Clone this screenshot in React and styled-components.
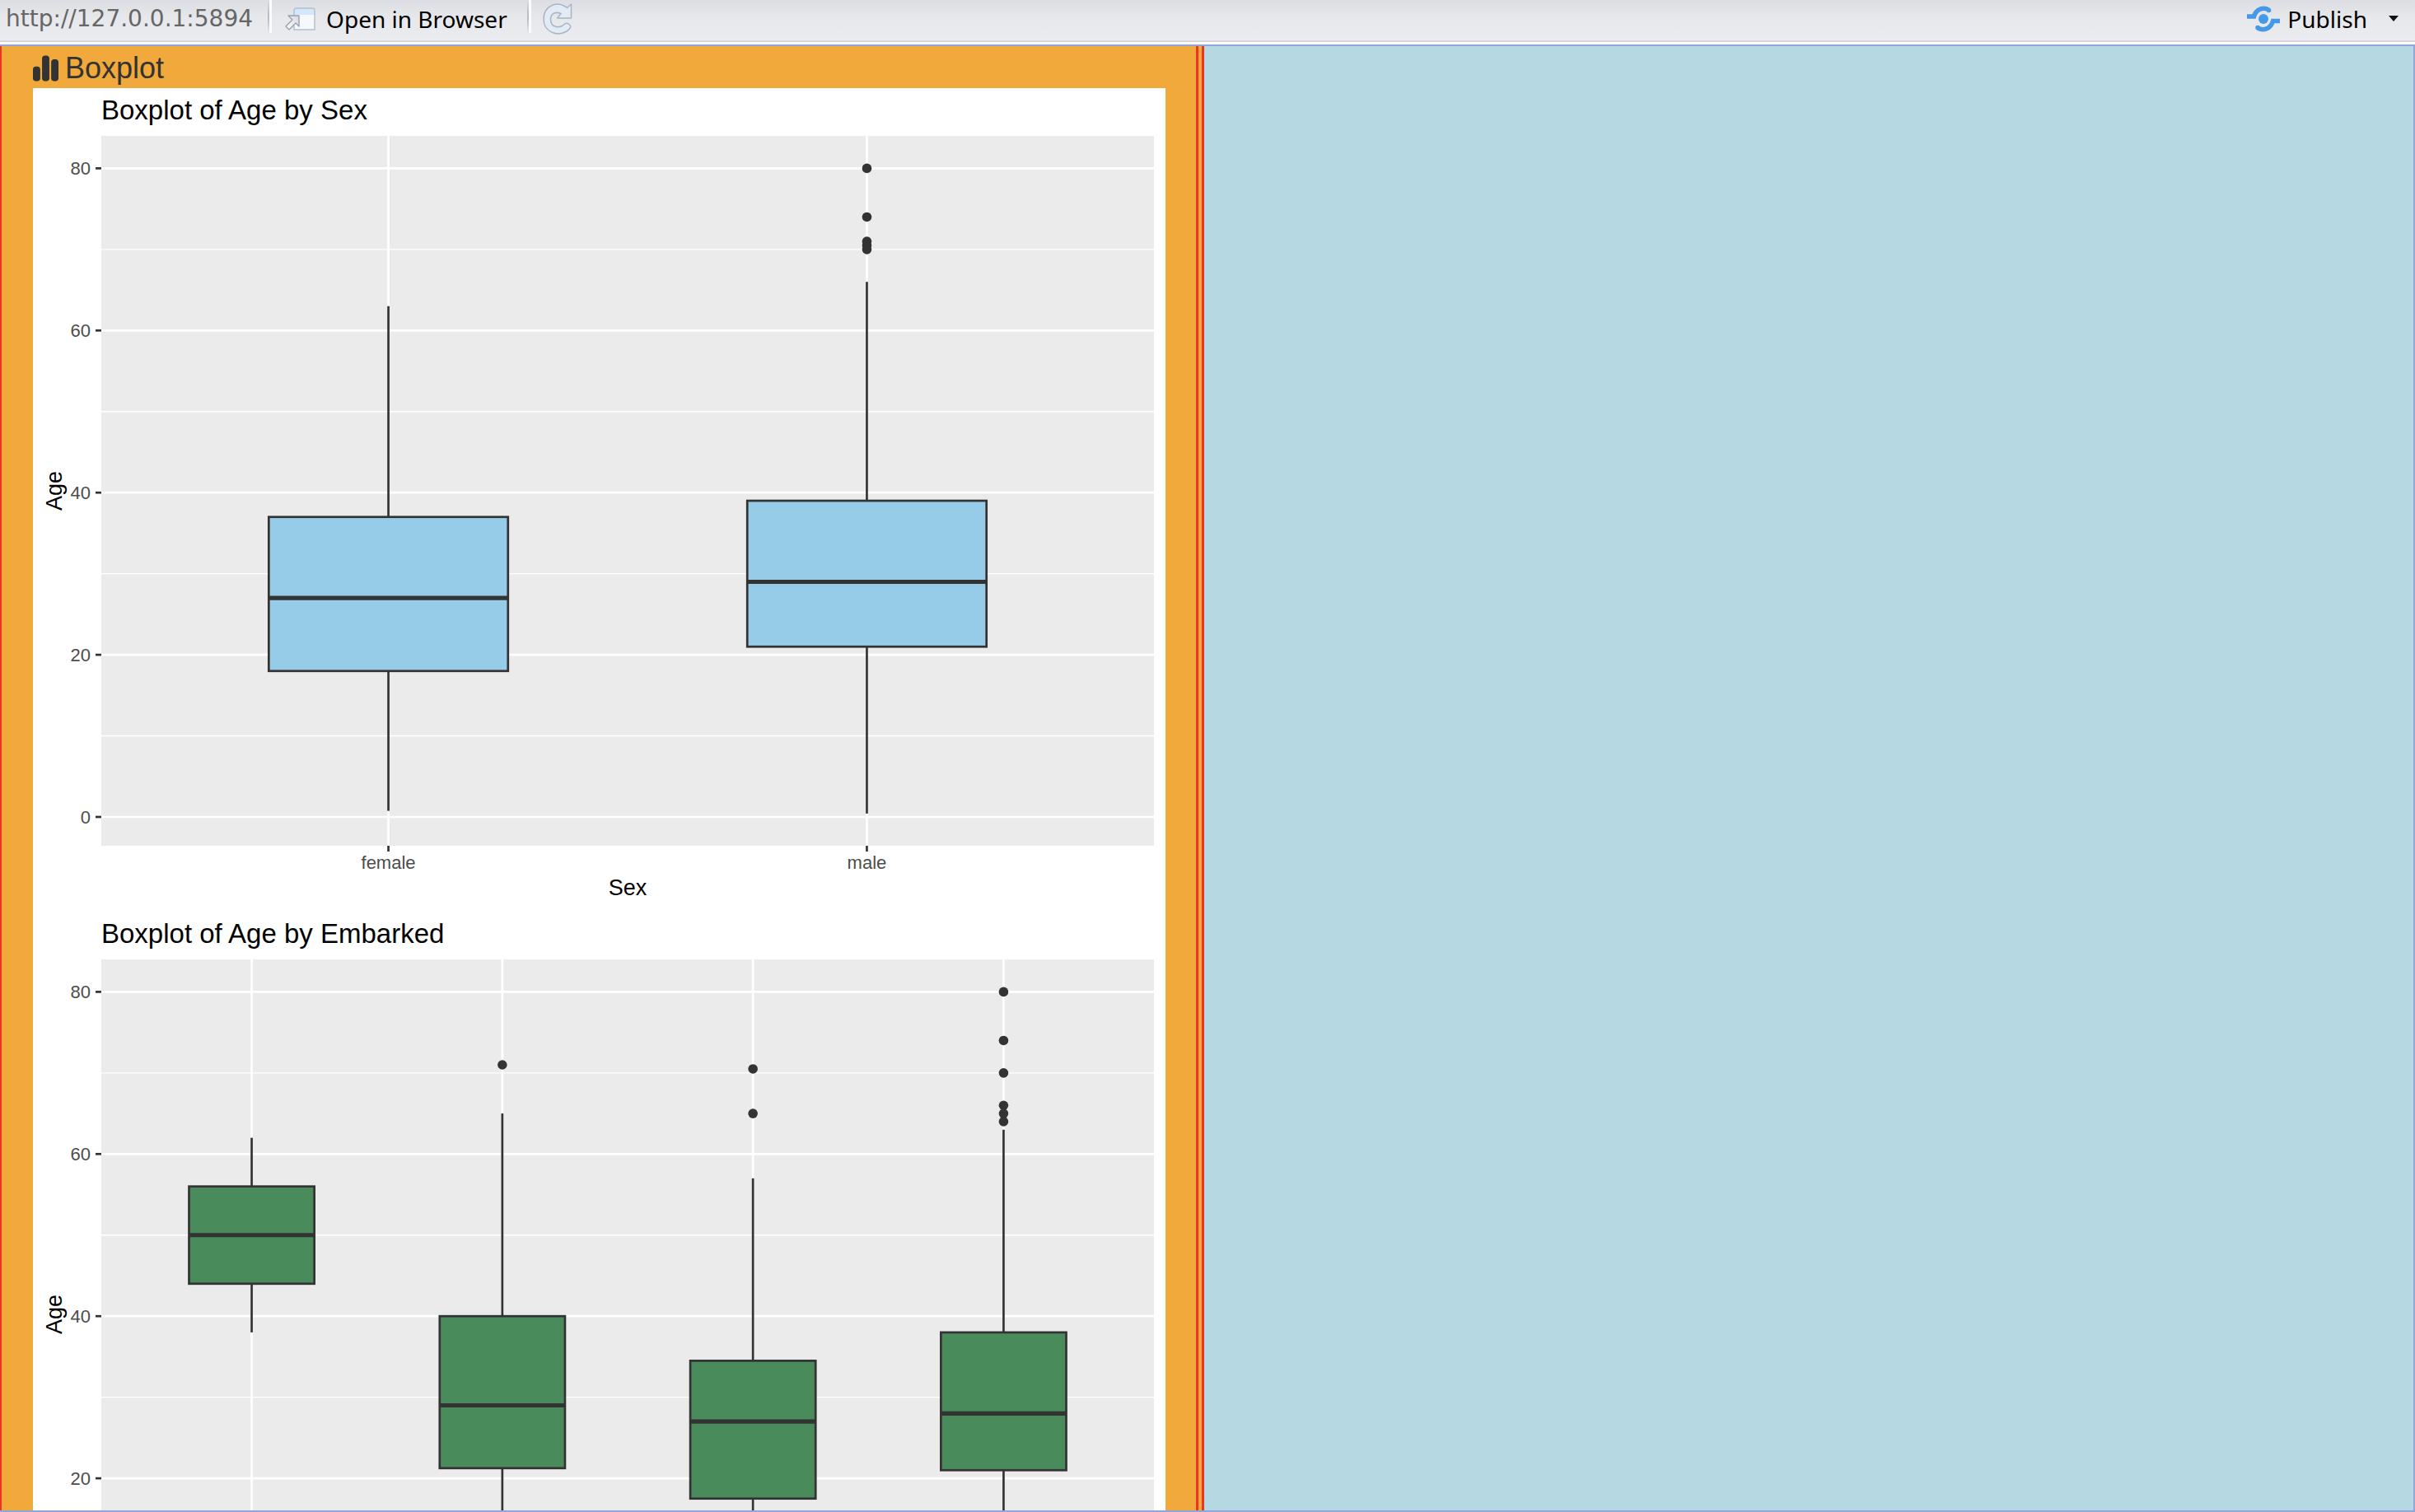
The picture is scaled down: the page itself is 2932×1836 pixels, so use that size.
import React from "react";
import styled, { createGlobalStyle } from "styled-components";
import { FaChartSimple } from "react-icons/fa6";

const GlobalStyle = createGlobalStyle`
  * { box-sizing: border-box; }
  body { margin: 0; }
`;

const Viewer = styled.div`
  display: flex;
  flex-direction: column;
  height: 100vh;
  overflow: hidden;
  font-family: "Noto Sans", "Open Sans", sans-serif;
`;

const Toolbar = styled.header`
  display: flex;
  align-items: center;
  height: 51px;
  flex: none;
  padding: 0 14px 4px 7px;
  background: linear-gradient(#dcdde2, #e7e8ec 45%, #ebecf0);
  border-bottom: 2px solid #d6d8dd;
`;

const Address = styled.span`
  font-family: "DejaVu Sans", sans-serif;
  font-size: 28px;
  line-height: 44px;
  color: #666;
`;

const Divider = styled.span`
  width: 5px;
  height: 40px;
  margin: 0 14px 5px 18px;
  background:
    linear-gradient(to right, transparent 50%, #fbfbfc 50%),
    linear-gradient(#dcdde2, #bcbdc2 40%, #bcbdc2 60%, #e7e8ec);
`;

const ToolButton = styled.button`
  display: flex;
  align-items: center;
  gap: ${(p) => p.$gap || 0}px;
  padding: 0 6px 0 0;
  border: 0;
  background: none;
  color: #000;
  font: 28px/44px "Noto Sans", "Open Sans", sans-serif;
`;

const Spacer = styled.div`
  flex: 1;
`;

const PublishGroup = styled.div`
  display: flex;
  align-items: center;
  gap: 20px;
`;

const Content = styled.main`
  flex: 1;
  min-height: 0;
  display: grid;
  grid-template-columns: 1462fr 1468fr;
  margin-top: 3px;
  border: 2px solid #8ea6d9;
  border-left: 0;
  background: #b6d8e3;
`;

const OuterColumn = styled.section`
  display: flex;
  min-width: 0;
  min-height: 0;
  background: #f0a93a;
  border-right: 3px solid #ec3423;
  padding-right: 4px;
`;

const InnerColumn = styled.div`
  flex: 1;
  min-width: 0;
  overflow-y: auto;
  scrollbar-width: none;
  padding: 0 37px 0 38px;
  border-left: 2px solid #ec3423;
  border-right: 3px solid #ec3423;
`;

const PanelTitle = styled.h1`
  display: flex;
  align-items: center;
  gap: 8px;
  margin: 0;
  padding: 6px 0 3px;
  font: 36px/42px "Liberation Sans", Arial, sans-serif;
  color: #333;

  svg {
    width: 31px;
    height: 36px;
  }
`;

const Plot = styled.svg`
  display: block;
  width: 100%;
  background: #fff;
  font-family: "Liberation Sans", Arial, sans-serif;
`;

const PlotTitle = styled.text`
  font-size: 33px;
  fill: #000;
`;

const AxisTitle = styled.text`
  font-size: 27px;
  fill: #000;
  text-anchor: middle;
`;

const TickLabel = styled.text`
  font-size: 22px;
  fill: #4d4d4d;
  text-anchor: ${(p) => p.$anchor};
`;

const PANEL = { left: 83, right: 1361, top: 58, bottom: 920 };
const ZERO = 885;
const UNIT = 9.845;
const yOf = (age) => ZERO - age * UNIT;

const bySex = [
  { name: "female", low: 0.75, q1: 18, median: 27, q3: 37, high: 63, outliers: [] },
  { name: "male", low: 0.42, q1: 21, median: 29, q3: 39, high: 66, outliers: [80, 74, 71, 70.5, 70] },
];

const byEmbarked = [
  { name: "", low: 38, q1: 44, median: 50, q3: 56, high: 62, outliers: [] },
  { name: "C", low: 0.42, q1: 21.25, median: 29, q3: 40, high: 65, outliers: [71] },
  { name: "Q", low: 2, q1: 17.5, median: 27, q3: 34.5, high: 57, outliers: [70.5, 65] },
  { name: "S", low: 0.67, q1: 21, median: 28, q3: 38, high: 63, outliers: [80, 74, 70, 66, 65, 64] },
];

function BoxPlot({ title, label, groups, fill }) {
  const { left, right, top, bottom } = PANEL;
  const step = (right - left) / (groups.length + 0.2);
  const half = step / 4;
  const xOf = (i) => left + step * (i + 0.6);
  return (
    <Plot viewBox="0 0 1375 1000" role="img" aria-label={title}>
      <PlotTitle x={left} y="38">{title}</PlotTitle>
      <rect x={left} y={top} width={right - left} height={bottom - top} fill="#ebebeb" />
      {[10, 30, 50, 70].map((v) => (
        <line key={v} x1={left} x2={right} y1={yOf(v)} y2={yOf(v)} stroke="#fff" strokeWidth="1.4" />
      ))}
      {[0, 20, 40, 60, 80].map((v) => (
        <g key={v}>
          <line x1={left} x2={right} y1={yOf(v)} y2={yOf(v)} stroke="#fff" strokeWidth="2.7" />
          <line x1={left - 7} x2={left} y1={yOf(v)} y2={yOf(v)} stroke="#333" strokeWidth="2.7" />
          <TickLabel $anchor="end" x={left - 13} y={yOf(v) + 8}>{v}</TickLabel>
        </g>
      ))}
      {groups.map((g, i) => {
        const x = xOf(i);
        return (
          <g key={g.name}>
            <line x1={x} x2={x} y1={top} y2={bottom} stroke="#fff" strokeWidth="2.7" />
            <line x1={x} x2={x} y1={bottom} y2={bottom + 7} stroke="#333" strokeWidth="2.7" />
            <TickLabel $anchor="middle" x={x} y={bottom + 28}>{g.name}</TickLabel>
          </g>
        );
      })}
      {groups.map((g, i) => {
        const x = xOf(i);
        return (
          <g key={g.name} stroke="#333" strokeWidth="2.7">
            {g.outliers.map((v) => (
              <circle key={v} cx={x} cy={yOf(v)} r="5.8" fill="#333" stroke="none" />
            ))}
            <line x1={x} x2={x} y1={yOf(g.high)} y2={yOf(g.q3)} />
            <line x1={x} x2={x} y1={yOf(g.q1)} y2={yOf(g.low)} />
            <rect x={x - half} y={yOf(g.q3)} width={half * 2} height={(g.q3 - g.q1) * UNIT} fill={fill} />
            <line x1={x - half} x2={x + half} y1={yOf(g.median)} y2={yOf(g.median)} strokeWidth="5.2" />
          </g>
        );
      })}
      <AxisTitle x={(left + right) / 2} y="980">{label}</AxisTitle>
      <AxisTitle transform={`translate(35 ${(top + bottom) / 2}) rotate(-90)`}>Age</AxisTitle>
    </Plot>
  );
}

function OpenIcon() {
  return (
    <svg width="40" height="30" viewBox="0 0 40 30" aria-hidden="true">
      <defs>
        <linearGradient id="arrowFill" x1="0" y1="1" x2="1" y2="0">
          <stop offset="0" stopColor="#fff" />
          <stop offset="1" stopColor="#d5d8de" />
        </linearGradient>
      </defs>
      <path d="M13 28V5q0-3 3-3h19q3 0 3 3v23z" fill="#f6f8fc" />
      <path d="M13 10V5q0-3 3-3h19q3 0 3 3v5z" fill="#d3e7fd" />
      <path d="M13 28V5q0-3 3-3h19q3 0 3 3v23z" fill="none" stroke="#b3bfcc" strokeWidth="1.4" />
      <path d="M6 11H19V24L15 20 7 28 3 24 11 16z" fill="url(#arrowFill)" stroke="#96a2b0" strokeWidth="1.4" strokeLinejoin="round" />
    </svg>
  );
}

function RefreshIcon() {
  return (
    <svg width="36" height="40" viewBox="0 0 36 40" aria-hidden="true">
      <path
        d="M29.500 6.500 34.500 2V19H17.500L22 13.500C15 10.500 9.500 14 9.500 20.500 9.500 30 20 32.500 26 26.500Q29 24 32 26.500 35.500 29 32 32.500C21 43.500 1 37 1 20.500 1 4 17-3 29.500 6.500z"
        fill="#e2eaf6"
        stroke="#a9b5c3"
        strokeWidth="1.500"
        strokeLinejoin="round"
      />
    </svg>
  );
}

function PublishIcon() {
  return (
    <svg width="40" height="32" viewBox="0 0 40 32" aria-hidden="true">
      <circle cx="20" cy="16" r="6" fill="#4599e6" />
      <g fill="none" stroke="#4599e6" strokeWidth="5.500">
        <path d="M0 13h8.500C11 4 20 1 26.500 5" />
        <path d="M40 18.500h-8.500C29 28 20 31 13 27" />
      </g>
      <g fill="#4599e6">
        <circle cx="26.500" cy="5.500" r="2.800" />
        <circle cx="13" cy="26.500" r="2.800" />
      </g>
    </svg>
  );
}

export default function App() {
  return (
    <>
      <GlobalStyle />
      <Viewer>
        <Toolbar>
          <Address>http://127.0.0.1:5894</Address>
          <Divider />
          <ToolButton type="button" $gap={12}>
            <OpenIcon />
            Open in Browser
          </ToolButton>
          <Divider />
          <ToolButton type="button" aria-label="Refresh">
            <RefreshIcon />
          </ToolButton>
          <Spacer />
          <PublishGroup>
            <ToolButton type="button" $gap={9}>
              <PublishIcon />
              Publish
            </ToolButton>
            <ToolButton type="button" aria-label="Publish options">
              <svg width="12" height="7" viewBox="0 0 12 7" aria-hidden="true">
                <path d="M0 0h12L6 7z" fill="#111" />
              </svg>
            </ToolButton>
          </PublishGroup>
        </Toolbar>
        <Content>
          <OuterColumn>
            <InnerColumn>
              <PanelTitle>
                <FaChartSimple aria-hidden="true" />
                Boxplot
              </PanelTitle>
              <BoxPlot title="Boxplot of Age by Sex" label="Sex" groups={bySex} fill="#96cce8" />
              <BoxPlot title="Boxplot of Age by Embarked" label="Embarked" groups={byEmbarked} fill="#4a8b5c" />
            </InnerColumn>
          </OuterColumn>
        </Content>
      </Viewer>
    </>
  );
}
